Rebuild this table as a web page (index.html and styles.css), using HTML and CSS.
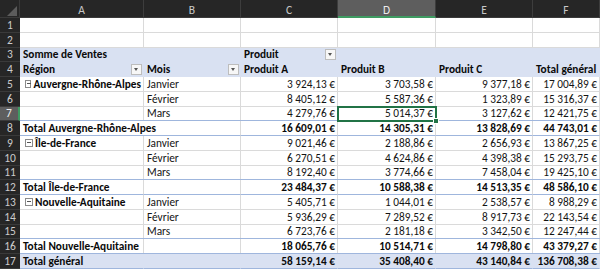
FILE: index.html
```html
<!DOCTYPE html>
<html lang="fr">
<head>
  <meta charset="UTF-8">
  <title>Tableau croisé - Somme de Ventes</title>
  <link rel="stylesheet" href="styles.css">
</head>
<body>
  <div class="sheet">
    <!-- column headers -->
    <div class="corner"><svg width="20" height="18" viewBox="0 0 20 18"><polygon points="7,16 17,16 17,6" fill="#5c5c5c"/></svg></div>
    <div class="col-head">A</div>
    <div class="col-head">B</div>
    <div class="col-head">C</div>
    <div class="col-head current">D</div>
    <div class="col-head">E</div>
    <div class="col-head">F</div>

    <div class="row-head">1</div>
    <div class="cell"></div><div class="cell"></div><div class="cell"></div><div class="cell"></div><div class="cell"></div><div class="cell"></div>

    <div class="row-head">2</div>
    <div class="cell"></div><div class="cell"></div><div class="cell"></div><div class="cell"></div><div class="cell"></div><div class="cell"></div>

    <div class="row-head">3</div>
    <div class="cell pv bold">Somme de Ventes</div>
    <div class="cell pv"></div>
    <div class="cell pv bold">Produit<span class="dd"></span></div>
    <div class="cell pv"></div><div class="cell pv"></div><div class="cell pv"></div>

    <div class="row-head">4</div>
    <div class="cell pv bold">Région<span class="dd"></span></div>
    <div class="cell pv bold">Mois<span class="dd"></span></div>
    <div class="cell pv bold">Produit A</div>
    <div class="cell pv bold">Produit B</div>
    <div class="cell pv bold">Produit C</div>
    <div class="cell pv bold">Total général</div>

    <div class="row-head">5</div>
    <div class="cell bold"><span class="tog"></span>Auvergne-Rhône-Alpes</div>
    <div class="cell">Janvier</div>
    <div class="cell num">3 924,13 €</div><div class="cell num">3 703,58 €</div><div class="cell num">9 377,18 €</div><div class="cell num">17 004,89 €</div>

    <div class="row-head">6</div>
    <div class="cell"></div>
    <div class="cell">Février</div>
    <div class="cell num">8 405,12 €</div><div class="cell num">5 587,36 €</div><div class="cell num">1 323,89 €</div><div class="cell num">15 316,37 €</div>

    <div class="row-head current">7</div>
    <div class="cell"></div>
    <div class="cell">Mars</div>
    <div class="cell num">4 279,76 €</div><div class="cell num active">5 014,37 €</div><div class="cell num">3 127,62 €</div><div class="cell num">12 421,75 €</div>

    <div class="row-head">8</div>
    <div class="cell sub bold wide">Total Auvergne-Rhône-Alpes</div>
    <div class="cell sub bold num">16 609,01 €</div><div class="cell sub bold num">14 305,31 €</div><div class="cell sub bold num">13 828,69 €</div><div class="cell sub bold num">44 743,01 €</div>

    <div class="row-head">9</div>
    <div class="cell bold"><span class="tog"></span>Île-de-France</div>
    <div class="cell">Janvier</div>
    <div class="cell num">9 021,46 €</div><div class="cell num">2 188,86 €</div><div class="cell num">2 656,93 €</div><div class="cell num">13 867,25 €</div>

    <div class="row-head">10</div>
    <div class="cell"></div>
    <div class="cell">Février</div>
    <div class="cell num">6 270,51 €</div><div class="cell num">4 624,86 €</div><div class="cell num">4 398,38 €</div><div class="cell num">15 293,75 €</div>

    <div class="row-head">11</div>
    <div class="cell"></div>
    <div class="cell">Mars</div>
    <div class="cell num">8 192,40 €</div><div class="cell num">3 774,66 €</div><div class="cell num">7 458,04 €</div><div class="cell num">19 425,10 €</div>

    <div class="row-head">12</div>
    <div class="cell sub bold">Total Île-de-France</div>
    <div class="cell sub"></div>
    <div class="cell sub bold num">23 484,37 €</div><div class="cell sub bold num">10 588,38 €</div><div class="cell sub bold num">14 513,35 €</div><div class="cell sub bold num">48 586,10 €</div>

    <div class="row-head">13</div>
    <div class="cell bold"><span class="tog"></span>Nouvelle-Aquitaine</div>
    <div class="cell">Janvier</div>
    <div class="cell num">5 405,71 €</div><div class="cell num">1 044,01 €</div><div class="cell num">2 538,57 €</div><div class="cell num">8 988,29 €</div>

    <div class="row-head">14</div>
    <div class="cell"></div>
    <div class="cell">Février</div>
    <div class="cell num">5 936,29 €</div><div class="cell num">7 289,52 €</div><div class="cell num">8 917,73 €</div><div class="cell num">22 143,54 €</div>

    <div class="row-head">15</div>
    <div class="cell"></div>
    <div class="cell">Mars</div>
    <div class="cell num">6 723,76 €</div><div class="cell num">2 181,18 €</div><div class="cell num">3 342,50 €</div><div class="cell num">12 247,44 €</div>

    <div class="row-head">16</div>
    <div class="cell sub bold">Total Nouvelle-Aquitaine</div>
    <div class="cell sub"></div>
    <div class="cell sub bold num">18 065,76 €</div><div class="cell sub bold num">10 514,71 €</div><div class="cell sub bold num">14 798,80 €</div><div class="cell sub bold num">43 379,27 €</div>

    <div class="row-head">17</div>
    <div class="cell pv sub bold">Total général</div>
    <div class="cell pv sub"></div>
    <div class="cell pv sub bold num">58 159,14 €</div><div class="cell pv sub bold num">35 408,40 €</div><div class="cell pv sub bold num">43 140,84 €</div><div class="cell pv sub bold num">136 708,38 €</div>
  </div>
</body>
</html>
```

FILE: styles.css
```css
body {
  margin: 0;
  background: #ffffff;
}
.sheet {
  display: grid;
  grid-template-columns: 20px 124px 97px 97px 98px 97px 67px;
  grid-template-rows: 18px repeat(17, 14.76px);
  width: 600px;
  height: 269px;
  overflow: hidden;
  font-family: Carlito, Lato, "Liberation Sans", sans-serif;
  font-size: 11.3px;
  color: #141414;
}
.corner {
  background: #262626;
  border-right: 1px solid #3a3a3a;
  border-bottom: 1px solid #3a3a3a;
}
.corner svg {
  display: block;
}
.col-head {
  background: #262626;
  color: #c8c8c8;
  padding-top: 3px;
  border-right: 1px solid #3d3d3d;
  border-bottom: 1px solid #3a3a3a;
  display: flex;
  align-items: center;
  justify-content: center;
  font-size: 11.5px;
}
.col-head.current {
  background: #5e5e5e;
  color: #ececec;
  border-bottom: 2px solid #3f9b62;
}
.row-head {
  background: #262626;
  color: #cccccc;
  font-size: 11.5px;
  border-bottom: 1px solid #3a3a3a;
  display: flex;
  align-items: center;
  justify-content: center;
}
.row-head.current {
  background: #5e5e5e;
  color: #ececec;
  border-right: 2px solid #3f9b62;
}
.cell {
  display: flex;
  align-items: flex-end;
  padding: 0 2px 0 3px;
  line-height: 13px;
  border-right: 1px solid #dadada;
  border-bottom: 1px solid #dadada;
  white-space: nowrap;
  overflow: visible;
  min-width: 0;
}
.cell.num {
  justify-content: flex-end;
  padding: 0 2px 0 0;
}
.bold {
  font-weight: bold;
  color: #0a0a0a;
}
.pv {
  background: #d9e1f2;
  border-color: #d9e1f2;
}
.sub {
  border-bottom-color: #9fb6dd;
  box-shadow: 0 -1px 0 #9fb6dd;
}
.wide {
  grid-column: span 2;
}
.dd {
  position: relative;
  align-self: center;
  width: 9px;
  height: 9px;
  margin-left: auto;
  margin-right: -1px;
  background: #f7f7f7;
  border: 1px solid #bdbdbd;
}
.dd::before {
  content: "";
  position: absolute;
  left: 2px;
  top: 3px;
  border-left: 2.5px solid transparent;
  border-right: 2.5px solid transparent;
  border-top: 3px solid #555555;
}
.tog {
  position: relative;
  align-self: center;
  width: 6px;
  height: 6px;
  margin: 0 2px 0 2px;
  border: 1px solid #8a8a8a;
  background: #ffffff;
}
.tog::before {
  content: "";
  position: absolute;
  left: 1px;
  top: 2px;
  width: 4px;
  height: 1px;
  background: #555555;
}
.active {
  position: relative;
  z-index: 1;
  outline: 2px solid #217346;
  outline-offset: -1px;
}
.active::after {
  content: "";
  position: absolute;
  right: -4px;
  bottom: -4px;
  width: 4px;
  height: 4px;
  background: #217346;
  border: 1px solid #ffffff;
}
```
